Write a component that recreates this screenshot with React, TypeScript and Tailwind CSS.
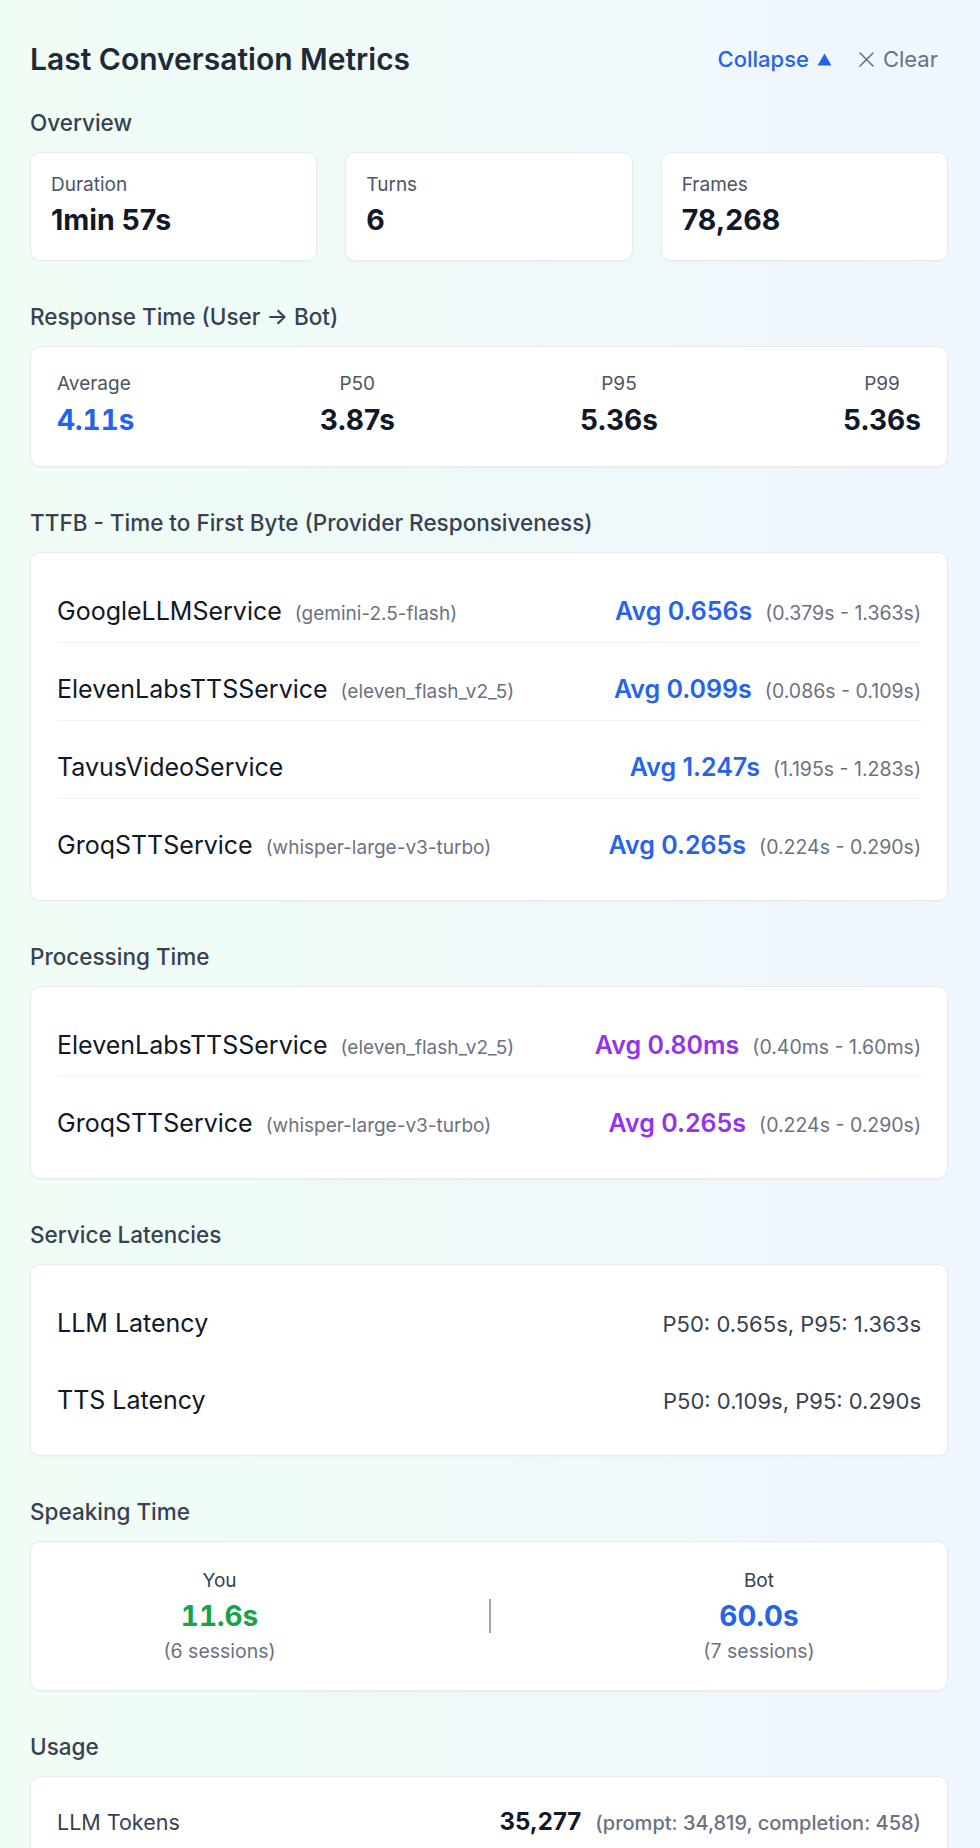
import React from 'react'

interface Row {
  name: string
  model?: string
  avg: string
  range: string
}

const ttfbRows: Row[] = [
  { name: 'GoogleLLMService', model: 'gemini-2.5-flash', avg: 'Avg 0.656s', range: '(0.379s - 1.363s)' },
  { name: 'ElevenLabsTTSService', model: 'eleven_flash_v2_5', avg: 'Avg 0.099s', range: '(0.086s - 0.109s)' },
  { name: 'TavusVideoService', avg: 'Avg 1.247s', range: '(1.195s - 1.283s)' },
  { name: 'GroqSTTService', model: 'whisper-large-v3-turbo', avg: 'Avg 0.265s', range: '(0.224s - 0.290s)' },
]

const processingRows: Row[] = [
  { name: 'ElevenLabsTTSService', model: 'eleven_flash_v2_5', avg: 'Avg 0.80ms', range: '(0.40ms - 1.60ms)' },
  { name: 'GroqSTTService', model: 'whisper-large-v3-turbo', avg: 'Avg 0.265s', range: '(0.224s - 0.290s)' },
]

const Section = ({ title, first, children }: { title: string; first?: boolean; children: React.ReactNode }) => (
  <section className={first ? 'mt-[32px]' : 'mt-[42px]'}>
    <h3 className="text-[22.5px] leading-[28px] font-medium text-[#374151] mb-[15px]">{title}</h3>
    {children}
  </section>
)

const Card = ({ className, children }: { className?: string; children: React.ReactNode }) => (
  <div className={`bg-white rounded-[10px] border border-[#e8eaee] shadow-[0_1px_2px_rgba(0,0,0,0.03)] ${className ?? ''}`}>
    {children}
  </div>
)

const ServiceRows = ({ rows, color }: { rows: Row[]; color: string }) => (
  <Card className="px-[26px] pt-[12px] pb-[24px]">
    {rows.map((r, i) => (
      <div
        key={r.name}
        className={`flex items-baseline justify-between pt-[30px] pb-[15px] leading-[32px] ${
          i < rows.length - 1 ? 'border-b border-[#f1f2f4]' : ''
        }`}
      >
        <div className="flex items-baseline">
          <span className="text-[25px] text-[#111827]">{r.name}</span>
          {r.model && (
            <span className="ml-[13px] text-[19px] leading-[24px] text-[#6b7280]">({r.model})</span>
          )}
        </div>
        <div className="flex items-baseline">
          <span className={`text-[25px] font-semibold ${color}`}>{r.avg}</span>
          <span className="ml-[13px] text-[19.5px] leading-[24px] text-[#6b7280]">{r.range}</span>
        </div>
      </div>
    ))}
  </Card>
)

const Stat = ({ label, value }: { label: string; value: string }) => (
  <Card className="px-[20px] pt-[20px] pb-[23px]">
    <div className="text-[19px] leading-[24px] text-[#4b5563]">{label}</div>
    <div className="mt-[6px] text-[28.5px] leading-[34px] font-bold text-[#111827]">{value}</div>
  </Card>
)

const Percentile = ({
  label,
  value,
  highlight,
  align,
}: {
  label: string
  value: string
  highlight?: boolean
  align: string
}) => (
  <div className={`flex flex-col ${align}`}>
    <span className="text-[19px] leading-[24px] text-[#4b5563]">{label}</span>
    <span
      className={`mt-[6px] text-[28px] leading-[36px] font-bold ${
        highlight ? 'text-[#2563eb] tabular-nums' : 'text-[#111827]'
      }`}
    >
      {value}
    </span>
  </div>
)

export default function App() {
  return (
    <div className="min-h-screen w-full bg-gradient-to-r from-[#f0fdf4] to-[#eff6ff] font-['Inter',sans-serif] pl-[30px] pr-[32px] pt-[41px] pb-10">
      <div className="flex items-center justify-between h-[36px]">
        <h2 className="text-[30px] leading-[36px] font-semibold text-[#1f2937]">Last Conversation Metrics</h2>
        <div className="flex items-center gap-[27px] mr-[10px]">
          <button className="flex items-center gap-[8px] text-[22px] font-medium text-[#2563eb]">
            Collapse
            <svg width="15" height="13" viewBox="0 0 15 13" className="fill-[#2563eb]">
              <path d="M7.5 0.5 L14.5 12.5 L0.5 12.5 Z" />
            </svg>
          </button>
          <button className="flex items-center gap-[9px] text-[22px] text-[#6b7280]">
            <svg width="15" height="15" viewBox="0 0 15 15" fill="none" stroke="currentColor" strokeWidth="1.6" strokeLinecap="round">
              <path d="M1 1 L14 14 M14 1 L1 14" />
            </svg>
            Clear
          </button>
        </div>
      </div>

      <Section title="Overview" first>
        <div className="grid grid-cols-3 gap-[28px]">
          <Stat label="Duration" value="1min 57s" />
          <Stat label="Turns" value="6" />
          <Stat label="Frames" value="78,268" />
        </div>
      </Section>

      <Section title="Response Time (User → Bot)">
        <Card className="px-[26px] pt-[25px] pb-[28px] flex justify-between">
          <Percentile label="Average" value="4.11s" highlight align="items-start" />
          <Percentile label="P50" value="3.87s" align="items-center" />
          <Percentile label="P95" value="5.36s" align="items-center" />
          <Percentile label="P99" value="5.36s" align="items-center" />
        </Card>
      </Section>

      <Section title="TTFB - Time to First Byte (Provider Responsiveness)">
        <ServiceRows rows={ttfbRows} color="text-[#2563eb]" />
      </Section>

      <Section title="Processing Time">
        <ServiceRows rows={processingRows} color="text-[#9333ea]" />
      </Section>

      <Section title="Service Latencies">
        <Card className="px-[26px] pt-[12px] pb-[24px]">
          {[
            ['LLM Latency', 'P50: 0.565s, P95: 1.363s'],
            ['TTS Latency', 'P50: 0.109s, P95: 0.290s'],
          ].map(([name, val]) => (
            <div key={name} className="flex items-baseline justify-between pt-[30px] pb-[15px] leading-[32px]">
              <span className="text-[25px] text-[#111827]">{name}</span>
              <span className="text-[22px] leading-[28px] text-[#374151]">{val}</span>
            </div>
          ))}
        </Card>
      </Section>

      <Section title="Speaking Time">
        <Card className="px-[26px] pt-[27px] pb-[27px] flex items-center justify-around">
          <div className="flex flex-col items-center">
            <span className="text-[19px] leading-[24px] text-[#374151]">You</span>
            <span className="mt-[6px] text-[28px] leading-[34px] font-bold tabular-nums text-[#16a34a]">11.6s</span>
            <span className="mt-[6px] text-[19.5px] leading-[24px] text-[#6b7280]">(6 sessions)</span>
          </div>
          <div className="w-[2px] h-[34px] bg-[#9ca3af]" />
          <div className="flex flex-col items-center">
            <span className="text-[19px] leading-[24px] text-[#374151]">Bot</span>
            <span className="mt-[6px] text-[28px] leading-[34px] font-bold text-[#2563eb]">60.0s</span>
            <span className="mt-[6px] text-[19.5px] leading-[24px] text-[#6b7280]">(7 sessions)</span>
          </div>
        </Card>
      </Section>

      <Section title="Usage">
        <Card className="px-[26px] pt-[29px] pb-[28px]">
          <div className="flex items-baseline justify-between leading-[32px]">
            <span className="text-[21.5px] leading-[28px] text-[#374151]">LLM Tokens</span>
            <div className="flex items-baseline">
              <span className="text-[24px] font-bold text-[#111827]">35,277</span>
              <span className="ml-[14px] text-[20px] leading-[26px] font-medium text-[#6b7280]">
                (prompt: 34,819, completion: 458)
              </span>
            </div>
          </div>
        </Card>
      </Section>
    </div>
  )
}
